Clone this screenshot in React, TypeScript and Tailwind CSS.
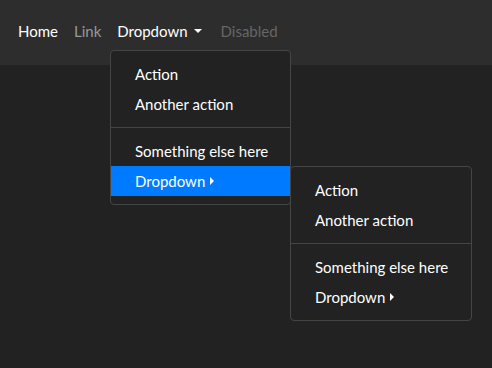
import React from "react";

function RightCaret() {
  return (
    <span className="ml-[5px] inline-block w-0 h-0 border-y-[4.5px] border-y-transparent border-l-[4.5px] border-l-white align-[1px]" />
  );
}

function Menu({ active, className }: { active?: boolean; className: string }) {
  const item = "h-[30px] flex items-center px-6 text-[15px] text-white whitespace-nowrap";
  return (
    <div className={"absolute bg-[#222] border border-[#454545] rounded py-2 " + className}>
      <div className={item}>Action</div>
      <div className={item}>Another action</div>
      <div className="my-2 h-px bg-[#454545]" />
      <div className={item}>Something else here</div>
      <div className={item + (active ? " bg-[#007bff]" : "")}>
        Dropdown
        <RightCaret />
      </div>
    </div>
  );
}

export default function App() {
  return (
    <div
      className="relative w-[492px] h-[368px] bg-[#222] overflow-hidden"
      style={{ fontFamily: "Lato, 'Noto Sans', sans-serif" }}
    >
      <nav className="h-[65px] bg-[#2d2d2d] flex items-center pl-[10px] pb-[4px] text-[15px] leading-[22px]">
        <span className="px-2 text-white">Home</span>
        <span className="px-2 text-[#999]">Link</span>
        <span className="pl-2 pr-[11px] text-white flex items-center">
          Dropdown
          <span className="ml-[6px] inline-block w-0 h-0 border-x-[4.5px] border-x-transparent border-t-[4.5px] border-t-white" />
        </span>
        <span className="px-2 text-[#666]">Disabled</span>
      </nav>
      <Menu active className="left-[110px] top-[50px] w-[181px]" />
      <Menu className="left-[290px] top-[166px] w-[182px]" />
    </div>
  );
}
